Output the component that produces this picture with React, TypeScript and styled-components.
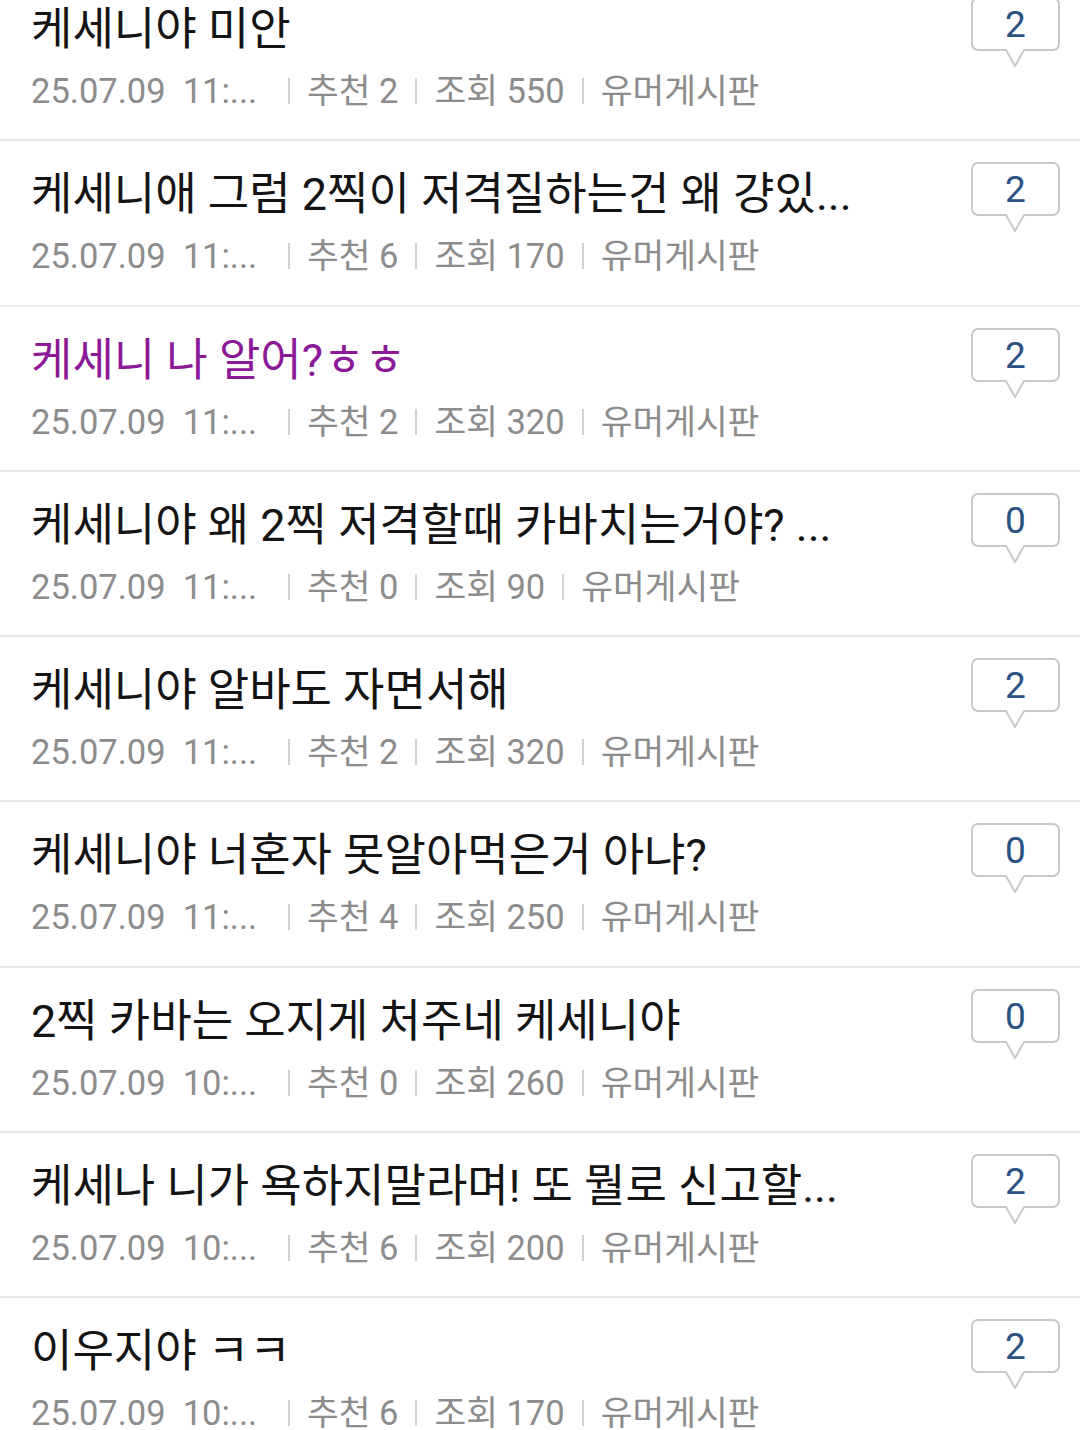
import React from 'react';
import styled, { createGlobalStyle } from 'styled-components';

const GlobalStyle = createGlobalStyle`
	html, body {
		margin: 0;
		padding: 0;
		background: #fff;
		overflow: hidden;
	}
	body {
		font-family: Roboto, "Noto Sans CJK KR", sans-serif;
	}
`;

const List = styled.ul`
	list-style: none;
	margin: -24px 0 0;
	padding: 0;
`;

const Row = styled.li`
	box-sizing: border-box;
	height: 165.3px;
	border-bottom: 2px solid #e8e8e8;
	display: flex;
	align-items: flex-start;
	padding: 0 20px 0 31px;
`;

const Body = styled.div`
	flex: 1;
	min-width: 0;
	display: flex;
	flex-direction: column;
	padding-top: 24px;
`;

const Title = styled.div<{ $visited?: boolean }>`
	font-size: 45px;
	line-height: 60px;
	color: ${(p) => (p.$visited ? '#8c1a98' : '#141414')};
	white-space: nowrap;
	overflow: hidden;
	text-overflow: ellipsis;
	max-width: 850px;
`;

const Meta = styled.div`
	display: flex;
	align-items: baseline;
	margin-top: 6px;
	height: 50px;
	line-height: 50px;
	font-size: 34.5px;
	color: #8c8c8c;
	white-space: nowrap;
`;

const DateCell = styled.span`
	width: 240px;
	overflow: hidden;
	text-overflow: ellipsis;
`;

const Sep = styled.span`
	align-self: center;
	width: 2px;
	height: 26px;
	background: #d2d2d2;
	margin: 0 17px;
`;

const Bubble = styled.div`
	position: relative;
	flex: none;
	width: 89px;
	height: 72px;
	margin-top: 21px;
	display: flex;
	justify-content: center;
	svg {
		position: absolute;
		left: 0;
		top: 0;
	}
`;

const Count = styled.span`
	position: relative;
	font-size: 37px;
	line-height: 55px;
	color: #2b5283;
`;

type Post = {
	title: string;
	time: string;
	likes: number;
	views: number;
	comments: number;
	visited?: boolean;
};

const posts: Post[] = [
	{ title: '케세니야 미안', time: '11:...', likes: 2, views: 550, comments: 2 },
	{ title: '케세니애 그럼 2찍이 저격질하는건 왜 걍있...', time: '11:...', likes: 6, views: 170, comments: 2 },
	{ title: '케세니 나 알어?ㅎㅎ', time: '11:...', likes: 2, views: 320, comments: 2, visited: true },
	{ title: '케세니야 왜 2찍 저격할때 카바치는거야? ...', time: '11:...', likes: 0, views: 90, comments: 0 },
	{ title: '케세니야 알바도 자면서해', time: '11:...', likes: 2, views: 320, comments: 2 },
	{ title: '케세니야 너혼자 못알아먹은거 아냐?', time: '11:...', likes: 4, views: 250, comments: 0 },
	{ title: '2찍 카바는 오지게 처주네 케세니야', time: '10:...', likes: 0, views: 260, comments: 0 },
	{ title: '케세나 니가 욕하지말라며! 또 뭘로 신고할...', time: '10:...', likes: 6, views: 200, comments: 2 },
	{ title: '이우지야 ㅋㅋ', time: '10:...', likes: 6, views: 170, comments: 2 },
];

const BubbleShape = () => (
	<svg width="89" height="72" viewBox="0 0 89 72">
		<path
			d="M7 1 H82 A6 6 0 0 1 88 7 V47 A6 6 0 0 1 82 53 H53 L44 69 L35 53 H7 A6 6 0 0 1 1 47 V7 A6 6 0 0 1 7 1 Z"
			fill="#fff"
			stroke="#c9c9c9"
			strokeWidth="2"
			strokeLinejoin="round"
		/>
	</svg>
);

const App = () => (
	<>
		<GlobalStyle />
		<List>
			{posts.map((p, i) => (
				<Row key={i}>
					<Body>
						<Title $visited={p.visited}>{p.title}</Title>
						<Meta>
							<DateCell>{`25.07.09\u00a0\u00a0${p.time}`}</DateCell>
							<Sep />
							<span>추천 {p.likes}</span>
							<Sep />
							<span>조회 {p.views}</span>
							<Sep />
							<span>유머게시판</span>
						</Meta>
					</Body>
					<Bubble>
						<BubbleShape />
						<Count>{p.comments}</Count>
					</Bubble>
				</Row>
			))}
		</List>
	</>
);

export default App;
